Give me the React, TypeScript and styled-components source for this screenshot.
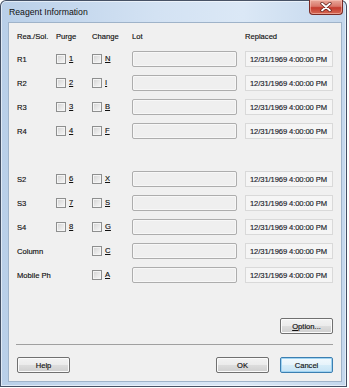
import React from "react";
import styled, { createGlobalStyle } from "styled-components";

const GlobalStyle = createGlobalStyle`
  html, body {
    margin: 0;
    padding: 0;
    background: #ffffff;
  }
  body {
    font-family: "Liberation Sans", Arial, sans-serif;
    color: #111111;
  }
`;

const Window = styled.div`
  box-sizing: border-box;
  width: 347px;
  height: 387px;
  border: 1px solid rgba(36, 46, 66, 0.8);
  border-radius: 6px 6px 0 0;
  background: linear-gradient(to right, #b9cfe8 0%, #d3e2f3 45%, #dbe8f6 70%, #c4d7ec 100%);
  box-shadow: inset 0 0 0 1px rgba(255, 255, 255, 0.55);
  display: flex;
  flex-direction: column;
`;

const TitleBar = styled.div`
  position: relative;
  height: 21px;
  display: flex;
  align-items: center;
  padding-left: 8px;
  font-size: 8.7px;
  color: #111111;
`;

const CloseButton = styled.div`
  position: absolute;
  top: -1px;
  right: 3px;
  width: 34px;
  height: 15px;
  box-sizing: border-box;
  border: 1px solid #7a2b25;
  border-top: none;
  border-radius: 0 0 4px 4px;
  background: linear-gradient(to bottom, #e9a99b 0%, #d9776a 45%, #c43b2e 55%, #d66a54 100%);
  box-shadow: inset 0 0 0 1px rgba(255, 210, 200, 0.5);
  display: flex;
  align-items: center;
  justify-content: center;
`;

const Client = styled.div`
  box-sizing: border-box;
  flex: 1;
  margin: 0 4px 4px 7px;
  border: 1px solid #9fb3c9;
  background: #f0f0f0;
  padding: 5px 8px 8px 8px;
  display: flex;
  flex-direction: column;
  font-size: 7.6px;
  color: #111111;
  -webkit-text-stroke: 0.15px #111111;
`;

const HeaderRow = styled.div`
  display: grid;
  grid-template-columns: 39px 36px 40px 105px 8px 88px;
  height: 16px;
  align-items: center;
`;

const Rows = styled.div`
  margin-top: 7px;
  display: flex;
  flex-direction: column;
  gap: 8px;
`;

const Row = styled.div`
  display: grid;
  grid-template-columns: 39px 36px 40px 105px 8px 88px;
  height: 16px;
  align-items: center;
`;

const Spacer = styled.div`
  height: 16px;
`;

const Label = styled.span`
  white-space: nowrap;
`;

const CheckWrap = styled.span`
  display: flex;
  align-items: center;
  gap: 3px;
  margin-top: -1px;
`;

const Box = styled.span`
  box-sizing: border-box;
  width: 10px;
  height: 10px;
  border: 1px solid #8e8f8f;
  background: linear-gradient(135deg, #d2d2d2 0%, #e6e6e6 50%, #f7f7f7 100%);
  box-shadow: inset 0 0 0 1px #f4f4f4;
`;

const Key = styled.span`
  text-decoration: underline;
  text-underline-offset: 1px;
`;

const LotBox = styled.div`
  box-sizing: border-box;
  height: 16px;
  border: 1px solid #adadad;
  border-radius: 2px;
  background: #efefef;
  box-shadow: inset 0 0 0 1px #f7f7f7;
`;

const DateBox = styled.div`
  box-sizing: border-box;
  height: 16px;
  border: 1px solid #d9d9d9;
  background: #f5f5f5;
  padding-left: 4px;
  display: flex;
  align-items: center;
  color: #1c2633;
  white-space: nowrap;
  letter-spacing: -0.1px;
`;

const OptionRow = styled.div`
  margin-top: 35px;
  display: flex;
  justify-content: flex-end;
`;

const Separator = styled.div`
  margin: 10px 0 0 -1px;
  height: 1px;
  background: #a0a0a0;
`;

const ButtonRow = styled.div`
  margin-top: 12px;
  display: flex;
  align-items: center;
  gap: 11px;
`;

const Button = styled.button<{ $default?: boolean }>`
  box-sizing: border-box;
  width: 53px;
  height: 16px;
  padding: 0;
  font-family: "Liberation Sans", Arial, sans-serif;
  font-size: 7.6px;
  color: #111111;
  -webkit-text-stroke: 0.15px #111111;
  border: 1px solid ${(p) => (p.$default ? "#3c7fb1" : "#707070")};
  border-radius: 2px;
  background: ${(p) =>
    p.$default
      ? "linear-gradient(to bottom, #f2f9fd 0%, #e6f3fb 50%, #d6ecf8 51%, #c6e3f5 100%)"
      : "linear-gradient(to bottom, #f3f3f3 0%, #ebebeb 50%, #dddddd 51%, #cfcfcf 100%)"};
  box-shadow: inset 0 0 0 1px ${(p) => (p.$default ? "#9fd3f2" : "#fbfbfb")};
  display: flex;
  align-items: center;
  justify-content: center;
`;

const Push = styled.div`
  flex: 1;
`;

type Item = { name: string; purge?: string; change: string } | null;

const items: Item[] = [
  { name: "R1", purge: "1", change: "N" },
  { name: "R2", purge: "2", change: "I" },
  { name: "R3", purge: "3", change: "B" },
  { name: "R4", purge: "4", change: "F" },
  null,
  { name: "S2", purge: "6", change: "X" },
  { name: "S3", purge: "7", change: "S" },
  { name: "S4", purge: "8", change: "G" },
  { name: "Column", change: "C" },
  { name: "Mobile Ph", change: "A" },
];

const DATE = "12/31/1969 4:00:00 PM";

function Check({ k }: { k: string }) {
  return (
    <CheckWrap>
      <Box />
      <Key>{k}</Key>
    </CheckWrap>
  );
}

export default function App() {
  return (
    <>
      <GlobalStyle />
      <Window>
        <TitleBar>
          Reagent Information
          <CloseButton>
            <svg width="12" height="10" viewBox="0 0 12 10">
              <path
                d="M2 1.5 L10 8.5 M10 1.5 L2 8.5"
                stroke="#5a1a14"
                strokeWidth="3.2"
                strokeLinecap="round"
              />
              <path
                d="M2 1.5 L10 8.5 M10 1.5 L2 8.5"
                stroke="#ffffff"
                strokeWidth="1.8"
                strokeLinecap="round"
              />
            </svg>
          </CloseButton>
        </TitleBar>
        <Client>
          <HeaderRow>
            <Label>Rea./Sol.</Label>
            <Label>Purge</Label>
            <Label>Change</Label>
            <Label>Lot</Label>
            <span />
            <Label>Replaced</Label>
          </HeaderRow>
          <Rows>
            {items.map((it, i) =>
              it ? (
                <Row key={i}>
                  <Label>{it.name}</Label>
                  {it.purge ? <Check k={it.purge} /> : <span />}
                  <Check k={it.change} />
                  <LotBox />
                  <span />
                  <DateBox>{DATE}</DateBox>
                </Row>
              ) : (
                <Spacer key={i} />
              )
            )}
          </Rows>
          <OptionRow>
            <Button>
              <Key>O</Key>ption...
            </Button>
          </OptionRow>
          <Separator />
          <ButtonRow>
            <Button>Help</Button>
            <Push />
            <Button>OK</Button>
            <Button $default>Cancel</Button>
          </ButtonRow>
        </Client>
      </Window>
    </>
  );
}
